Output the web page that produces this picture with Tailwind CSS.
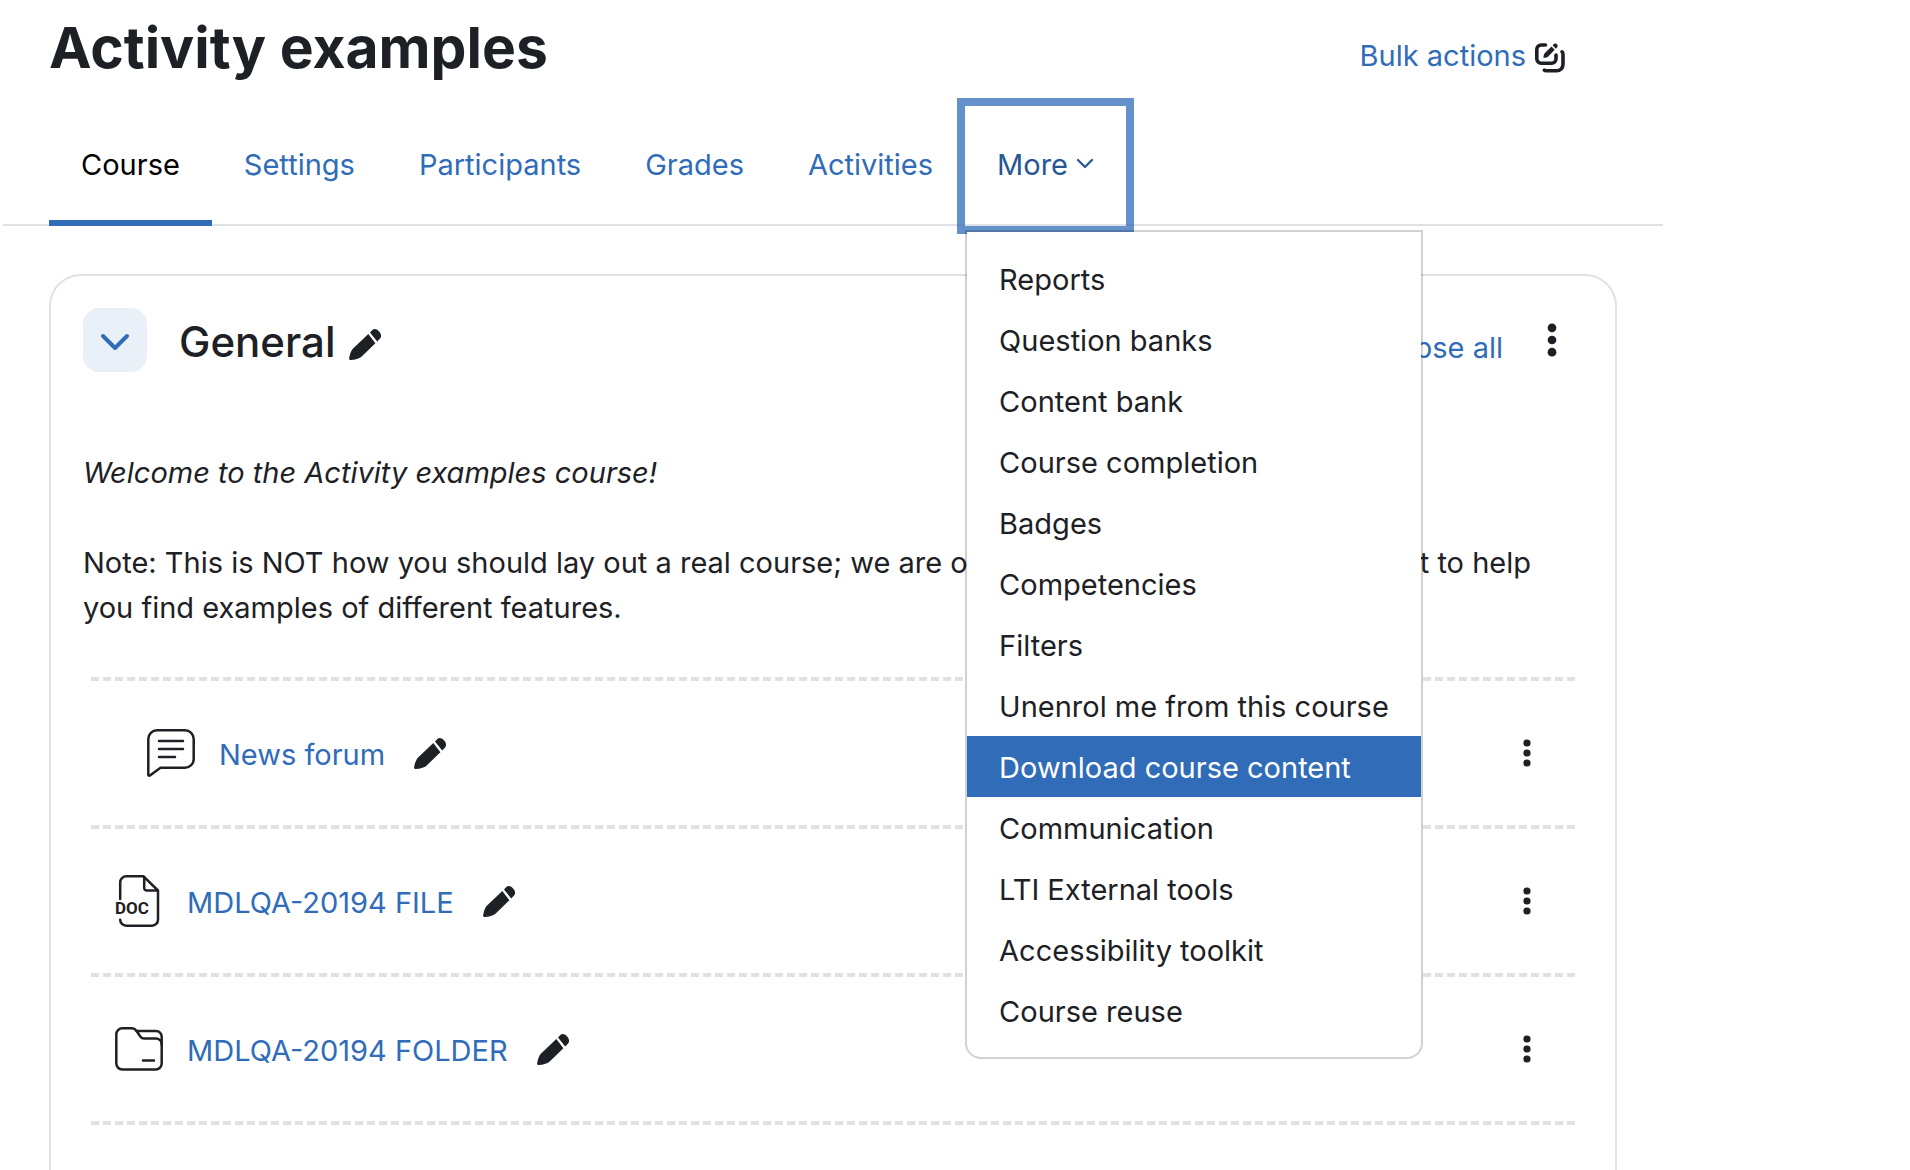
<!DOCTYPE html>
<html lang="en">

<head>
    <meta charset="UTF-8" />
    <meta name="viewport" content="width=device-width, initial-scale=1.0" />
    <title>Activity examples</title>
    <script src="https://cdn.jsdelivr.net/npm/@tailwindcss/browser@4"></script>
</head>

<body class="bg-white font-['Inter',sans-serif] text-[29px] leading-[45px] text-[#1d2125]">

    <!-- Shared icons -->
    <svg class="hidden" xmlns="http://www.w3.org/2000/svg">
        <symbol id="pencil" viewBox="0 0 34 34">
            <path fill="currentColor"
                d="M22 5.400l2.600-2.600c3.200-3.200 11.200 4 7.500 8.800l-2.900 2.900zM20.300 7.100l7.100 9.100-13.700 13.300c-3.100 2.800-8.900 3.500-11.400 3.500-.9 0-1.300-.5-1.200-1.400.4-2.500 1.400-7.700 4-10.200z" />
        </symbol>
        <symbol id="kebab" viewBox="0 0 8 28">
            <g fill="currentColor">
                <circle cx="4" cy="4" r="3.600" />
                <circle cx="4" cy="14" r="3.600" />
                <circle cx="4" cy="24" r="3.600" />
            </g>
        </symbol>
    </svg>

    <div class="flex min-h-screen max-w-[1666px] flex-col">

        <!-- Header -->
        <header class="flex items-start justify-between pl-[49px] pr-[100px] pt-3">
            <h1 class="text-[57px] leading-[72px] font-bold">Activity examples</h1>
            <button type="button" class="mt-[21px] flex items-center gap-2 text-[#306cb8]">
                Bulk actions
                <svg class="mt-1 h-8 w-8 text-[#1d2125]" viewBox="0 0 32 32" fill="none" stroke="currentColor"
                    stroke-width="3.600" stroke-linecap="round">
                    <path d="M11.500 3H7.200A4.400 4.400 0 0 0 2.800 7.400v9.400a4.400 4.400 0 0 0 4.400 4.400H17.600a4.400 4.400 0 0 0 4.400-4.400V13" />
                    <path d="M28 9.800c.7.500 1 1.300 1 2.700v10a6.300 6.300 0 0 1-6.300 6.300H12.500c-1.200 0-1.800-.2-2.200-.7" />
                    <path fill="currentColor" stroke="none"
                        d="M17.500 4.400l3.200 3.400-6.500 6.600c-1.300 1.100-3 1.500-4.700 1.400-.1-1.700.3-3.400 1.400-4.700zM18.600 3.300l1.300-1.400c2-1.600 5 1.200 3.300 3.300l-1.400 1.500z" />
                </svg>
            </button>
        </header>

        <!-- Tabs -->
        <nav class="ml-[3px] mt-[22px] mr-[3px] flex border-b-2 border-[#dee2e6] pl-[46px]">
            <a href="#" class="-mb-[2px] flex h-[120px] items-center border-b-6 border-[#306cb8] px-8 pt-[3px] text-black">Course</a>
            <a href="#" class="-mb-[2px] flex h-[120px] items-center border-b-6 border-transparent px-8 pt-[3px] text-[#306cb8]">Settings</a>
            <a href="#" class="-mb-[2px] flex h-[120px] items-center border-b-6 border-transparent px-8 pt-[3px] text-[#306cb8]">Participants</a>
            <a href="#" class="-mb-[2px] flex h-[120px] items-center border-b-6 border-transparent px-8 pt-[3px] text-[#306cb8]">Grades</a>
            <a href="#" class="-mb-[2px] flex h-[120px] items-center border-b-6 border-transparent px-8 pt-[3px] text-[#306cb8]">Activities</a>
            <div class="relative -mb-[2px]">
                <button type="button" aria-expanded="true"
                    class="flex h-[120px] items-center gap-2 border-b-6 border-transparent px-8 pt-[3px] text-[#265693] ring-8 ring-[#306cb8]/75">
                    More
                    <svg class="h-5 w-[18px]" viewBox="0 0 18 20" fill="none" stroke="currentColor" stroke-width="2.200"
                        stroke-linecap="round" stroke-linejoin="round">
                        <path d="M2 5l7 7 7-7" />
                    </svg>
                </button>

                <!-- Dropdown -->
                <ul class="absolute left-0 top-[124px] z-10 rounded-b-[16px] border-2 border-black/18 bg-white bg-clip-padding py-4 whitespace-nowrap">
                    <li><a href="#" class="block px-8 pt-[9px] pb-[7px]">Reports</a></li>
                    <li><a href="#" class="block px-8 pt-[9px] pb-[7px]">Question banks</a></li>
                    <li><a href="#" class="block px-8 pt-[9px] pb-[7px]">Content bank</a></li>
                    <li><a href="#" class="block px-8 pt-[9px] pb-[7px]">Course completion</a></li>
                    <li><a href="#" class="block px-8 pt-[9px] pb-[7px]">Badges</a></li>
                    <li><a href="#" class="block px-8 pt-[9px] pb-[7px]">Competencies</a></li>
                    <li><a href="#" class="block px-8 pt-[9px] pb-[7px]">Filters</a></li>
                    <li><a href="#" class="block px-8 pt-[9px] pb-[7px]">Unenrol me from this course</a></li>
                    <li><a href="#" class="block bg-[#306cb8] px-8 pt-[9px] pb-[7px] text-white">Download course content</a></li>
                    <li><a href="#" class="block px-8 pt-[9px] pb-[7px]">Communication</a></li>
                    <li><a href="#" class="block px-8 pt-[9px] pb-[7px]">LTI External tools</a></li>
                    <li><a href="#" class="block px-8 pt-[9px] pb-[7px]">Accessibility toolkit</a></li>
                    <li><a href="#" class="block px-8 pt-[9px] pb-[7px]">Course reuse</a></li>
                </ul>
            </div>
        </nav>

        <!-- Course section -->
        <main class="ml-[49px] mr-[49px] mt-12 flex-1 rounded-t-[32px] border-2 border-b-0 border-[#dee2e6] px-8 pt-8">
            <div class="flex items-center">
                <button type="button" aria-label="Collapse General"
                    class="flex h-16 w-16 items-center justify-center rounded-[16px] bg-[#e9f0f8] text-[#306cb8]">
                    <svg class="h-8 w-8" viewBox="0 0 32 32" fill="none" stroke="currentColor" stroke-width="4"
                        stroke-linecap="round" stroke-linejoin="round">
                        <path d="M4 12l12 12 12-12" />
                    </svg>
                </button>
                <h2 class="ml-8 pt-1 text-[42px] leading-[60px] font-medium">General</h2>
                <button type="button" aria-label="Edit section name" class="ml-3 mt-2">
                    <svg class="h-[34px] w-[34px]"><use href="#pencil" /></svg>
                </button>
                <a href="#" class="ml-auto mt-[14px] text-[#306cb8]">Collapse all</a>
                <button type="button" aria-label="Section menu" class="ml-11 mr-[26px]">
                    <svg class="h-[34px] w-[10px]"><use href="#kebab" /></svg>
                </button>
            </div>

            <div class="mt-[78px] pr-10">
                <p class="italic">Welcome to the Activity examples course!</p>
                <p class="mt-[45px]">Note: This is NOT how you should lay out a real course; we are only laying it out in this long format to help you find examples of different features.</p>
            </div>

            <ul class="mx-2 mt-[47px] border-t-4 border-dashed border-[#dee2e6]">
                <li class="flex h-[148px] items-center border-b-4 border-dashed border-[#dee2e6] pl-14 pr-11">
                    <svg class="h-12 w-12" viewBox="0 0 48 48" fill="none" stroke="currentColor" stroke-width="2.500"
                        stroke-linecap="round" stroke-linejoin="round">
                        <path d="M1.300 46V10a8.700 8.700 0 0 1 8.700-8.700H38a8.700 8.700 0 0 1 8.700 8.700V30a8.700 8.700 0 0 1-8.700 8.700H13.500L3.300 46.300c-.8.6-2 .5-2-.3z" />
                        <path d="M12 12h24M12 20h24M12 28h16" />
                    </svg>
                    <a href="#" class="ml-6 pt-[2px] text-[#306cb8]">News forum</a>
                    <button type="button" aria-label="Edit title" class="ml-7"><svg class="h-[34px] w-[34px]"><use href="#pencil" /></svg></button>
                    <button type="button" aria-label="News forum menu" class="ml-auto"><svg class="h-7 w-2"><use href="#kebab" /></svg></button>
                </li>
                <li class="flex h-[148px] items-center border-b-4 border-dashed border-[#dee2e6] pl-6 pr-11">
                    <svg class="h-[52px] w-12" viewBox="0 0 48 52" fill="none" stroke="currentColor" stroke-width="2.500"
                        stroke-linecap="round" stroke-linejoin="round">
                        <path d="M5.200 24V7.300a6 6 0 0 1 6-6H28.500L43 15.500V44.700a6 6 0 0 1-6 6H11.200a6 6 0 0 1-6-6" />
                        <path d="M29.200 2V13a2.500 2.500 0 0 0 2.500 2.500H42.500" />
                        <text x="0" y="39" fill="currentColor" stroke="none"
                            class="font-['Roboto',sans-serif] text-[17px] font-bold">DOC</text>
                    </svg>
                    <a href="#" class="ml-6 pt-[2px] text-[#306cb8]">MDLQA-20194 FILE</a>
                    <button type="button" aria-label="Edit title" class="ml-7"><svg class="h-[34px] w-[34px]"><use href="#pencil" /></svg></button>
                    <button type="button" aria-label="File menu" class="ml-auto"><svg class="h-7 w-2"><use href="#kebab" /></svg></button>
                </li>
                <li class="flex h-[148px] items-center border-b-4 border-dashed border-[#dee2e6] pl-6 pr-11">
                    <svg class="h-11 w-12" viewBox="0 0 48 44" fill="none" stroke="currentColor" stroke-width="2.500"
                        stroke-linecap="round" stroke-linejoin="round">
                        <path d="M1.300 7.300a6 6 0 0 1 6-6H17c2 0 3.200.8 4.200 2.200l4.300 6.200c.8 1.200 1.800 1.800 3.500 1.800H41a5.700 5.700 0 0 1 5.700 5.700V36.500a6 6 0 0 1-6 6H7.300a6 6 0 0 1-6-6z" />
                        <path d="M21.500 4H41a5.700 5.700 0 0 1 5.700 5.700v8M28 33.500h11" />
                    </svg>
                    <a href="#" class="ml-6 pt-[2px] text-[#306cb8]">MDLQA-20194 FOLDER</a>
                    <button type="button" aria-label="Edit title" class="ml-7"><svg class="h-[34px] w-[34px]"><use href="#pencil" /></svg></button>
                    <button type="button" aria-label="Folder menu" class="ml-auto"><svg class="h-7 w-2"><use href="#kebab" /></svg></button>
                </li>
            </ul>
        </main>
    </div>
</body>

</html>
